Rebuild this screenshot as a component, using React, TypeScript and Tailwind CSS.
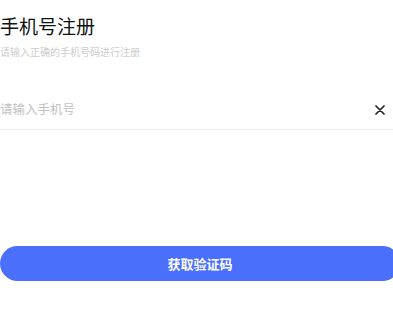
export default function App() {
  return (
    <main
      className="w-[393px] h-[336px] bg-white overflow-hidden"
      style={{ fontFamily: '"Noto Sans CJK SC", "Noto Sans", sans-serif' }}
    >
      <h1 className="pt-[12px] text-[19px] leading-[28px] text-[#111]">手机号注册</h1>
      <p className="mt-[5px] text-[10px] leading-[14px] text-[#cdcdcd]">请输入正确的手机号码进行注册</p>

      {/* Phone input */}
      <div className="mt-[31px] h-[40px] flex items-center border-b border-[#ececec]">
        <input
          className="flex-1 min-w-0 text-[12.5px] text-[#333] placeholder:text-[#c2c2c2] outline-none bg-transparent"
          placeholder="请输入手机号"
        />
        <button className="w-[14px] h-[14px] mr-[6px] flex items-center justify-center text-[#222]">
          <svg width="10" height="10" viewBox="0 0 10 10" fill="none" stroke="currentColor" strokeWidth="1.7" strokeLinecap="round">
            <path d="M1 1 L9 9 M9 1 L1 9" />
          </svg>
        </button>
      </div>

      <button className="mt-[116px] w-[400px] h-[35px] rounded-full bg-[#4a70fb] text-white text-[13px] font-bold">
        获取验证码
      </button>
    </main>
  )
}
